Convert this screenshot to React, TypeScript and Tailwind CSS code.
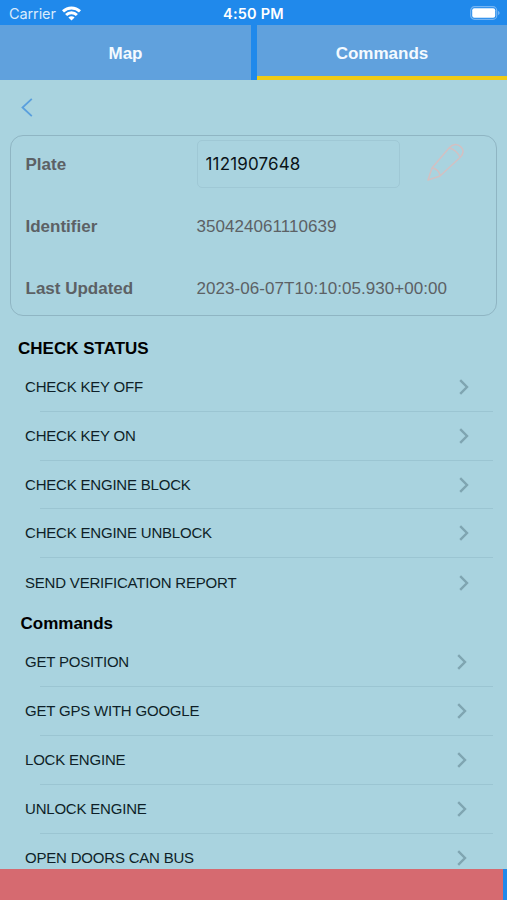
import { useState } from "react";

const CHECK_ITEMS = [
  "CHECK KEY OFF",
  "CHECK KEY ON",
  "CHECK ENGINE BLOCK",
  "CHECK ENGINE UNBLOCK",
  "SEND VERIFICATION REPORT",
];

const COMMAND_ITEMS = [
  "GET POSITION",
  "GET GPS WITH GOOGLE",
  "LOCK ENGINE",
  "UNLOCK ENGINE",
  "OPEN DOORS CAN BUS",
];

function StatusBar() {
  return (
    <div className="h-[25px] shrink-0 grid grid-cols-3 items-center pl-[9px] pr-[7px] pt-[2px] text-white font-['Inter',sans-serif]">
      <div className="flex items-center gap-[6px]">
        <span className="text-[14.5px] leading-5 -tracking-[0.1px] text-[#d9ebfc]">Carrier</span>
        <svg className="-mt-px" width="19" height="15" viewBox="0 0 19 15" fill="none" stroke="#fff" strokeWidth="2.9">
          <path d="M1 5.4a12.2 12.2 0 0 1 17 0" />
          <path d="M4.1 9a7.6 7.6 0 0 1 10.8 0" />
          <path d="M9.5 14.6 6.4 11.5a4.4 4.4 0 0 1 6.2 0z" fill="#fff" stroke="none" />
        </svg>
      </div>
      <div className="pr-[2px] text-center text-[14.5px] leading-5 font-semibold tracking-[0.2px]">4:50 PM</div>
      <svg className="justify-self-end -mt-px" width="30" height="14" viewBox="0 0 30 14">
        <rect x="0.7" y="0.7" width="26" height="12.6" rx="3.8" fill="none" stroke="#75b5f3" strokeWidth="1.2" />
        <rect x="2.2" y="2.2" width="23" height="9.6" rx="2" fill="#fff" />
        <path d="M28 5v4c1-.4 1.6-1 1.6-2S29 5.4 28 5z" fill="#75b5f3" />
      </svg>
    </div>
  );
}

function CommandList({ items, chevron }: { items: string[]; chevron: string }) {
  return (
    <ul className="pl-[25px] pr-[14px]">
      {items.map((item, i) => (
        <li key={item} className="h-[48.9px] flex flex-col">
          <button className={`flex-1 flex items-center justify-between text-left ${chevron}`}>
            <span className="text-[15px] leading-5 -tracking-[0.2px] text-[#0e1f28]">{item}</span>
            <svg width="10" height="16" viewBox="0 0 10 16" fill="none" stroke="#7fa5b1" strokeWidth="2.4">
              <path d="M1.2 1.2 8 8 1.2 14.8" />
            </svg>
          </button>
          {i < items.length - 1 && <div className="ml-[15px] h-px bg-[#9bc5d2]" />}
        </li>
      ))}
    </ul>
  );
}

export default function App() {
  const [tab, setTab] = useState("Commands");
  const [plate, setPlate] = useState("1121907648");

  return (
    <div className="w-full h-[900px] overflow-hidden flex flex-col bg-[#2089eb] font-['Liberation_Sans',Arial,sans-serif]">
      <StatusBar />

      <nav className="h-[55px] shrink-0 grid grid-cols-[251px_1fr] gap-[6px]">
        {["Map", "Commands"].map((name) => (
          <button
            key={name}
            onClick={() => setTab(name)}
            className={`bg-[#60a1dd] border-b-4 pt-[6px] text-[17px] font-bold text-[#f4faff] ${
              tab === name ? "border-[#efcb16]" : "border-transparent"
            }`}
          >
            {name}
          </button>
        ))}
      </nav>

      <main className="flex-1 min-h-0 overflow-hidden bg-[#a9d3df]">
        <div className="h-[55px] pl-[21px] pt-[18px]">
          <button aria-label="Back" className="block">
            <svg width="12" height="19" viewBox="0 0 12 19" fill="none" stroke="#5a9fdd" strokeWidth="1.8">
              <path d="M10.8 0.8 1.5 9.5 10.8 18.2" />
            </svg>
          </button>
        </div>

        <section className="mx-[10px] h-[181px] border border-[#8fb5c3] rounded-[13px] pt-1 pl-[14.5px] flex flex-col gap-[14px] text-[17px] text-[#5c6165]">
          <div className="h-12 flex items-center">
            <span className="w-[171px] pt-[2px] font-bold">Plate</span>
            <input
              value={plate}
              onChange={(e) => setPlate(e.target.value)}
              className="w-[203px] h-12 border border-[#9fc8d5] rounded-[5px] px-2 text-[17px] tracking-[0.15px] text-[#0b1418] font-['Inter',sans-serif] outline-none"
            />
            <button aria-label="Edit plate" className="ml-[27.5px] mb-[4px]">
              <svg width="38" height="39" viewBox="0 0 38 39" fill="none" stroke="#d3c0c2" strokeWidth="1.5" strokeLinejoin="round">
                <path d="M1 37 5 25 22 5C26 0.5 30.5 0.3 34 4 37.3 7.5 36.5 11 33 14.5L13 33Z" />
                <path d="M5 25C9 25.3 13 28.8 13 33" />
                <path d="M22 5C26.5 5.5 31.5 10 33 14.5" />
              </svg>
            </button>
          </div>
          <div className="h-12 flex items-center pt-[2px]">
            <span className="w-[171px] font-bold">Identifier</span>
            <span className="tracking-[0.05px]">350424061110639</span>
          </div>
          <div className="h-12 flex items-center pt-[2px]">
            <span className="w-[171px] font-bold">Last Updated</span>
            <span className="tracking-[0.05px]">2023-06-07T10:10:05.930+00:00</span>
          </div>
        </section>

        <h2 className="mt-[20px] pl-[18px] pt-px h-[26.8px] text-[17px] leading-6 font-bold text-black">CHECK STATUS</h2>
        <CommandList items={CHECK_ITEMS} chevron="pr-[24px]" />
        <h2 className="pl-[20.5px] h-[31.2px] pt-[5px] text-[17px] leading-6 font-bold text-black">Commands</h2>
        <CommandList items={COMMAND_ITEMS} chevron="pr-[26.5px]" />
      </main>

      <footer className="h-[31px] shrink-0 mr-[4px] bg-[#d66a70]" />
    </div>
  );
}
